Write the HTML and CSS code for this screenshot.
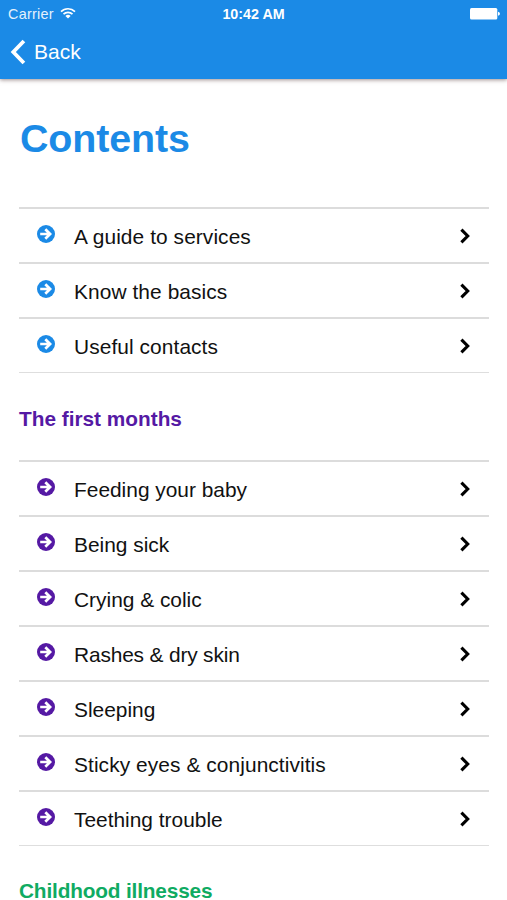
FILE: index.html
```html
<!DOCTYPE html>
<html lang="en">
<head>
<meta charset="utf-8">
<title>Contents</title>
<link rel="stylesheet" href="styles.css">
</head>
<body>
<svg class="symbols" aria-hidden="true">
  <symbol id="go" viewBox="0 0 18 18"><circle cx="9" cy="9" r="9" fill="currentColor"/><path d="M3.2 9H13M8.3 4.2L13.1 9L8.3 13.8" fill="none" stroke="#fff" stroke-width="2.7"/></symbol>
  <symbol id="chevron" viewBox="0 0 10 16"><path d="M1.4 1.7L7.7 8L1.4 14.3" fill="none" stroke="currentColor" stroke-width="3.1"/></symbol>
</svg>
<header class="header">
  <div class="status">
    <div class="carrier"><span>Carrier</span>
      <svg class="wifi" viewBox="0 0 16 12"><path d="M1 4.6A10 10 0 0 1 15 4.6M3.5 7.2A6.4 6.4 0 0 1 12.5 7.2" fill="none" stroke="currentColor" stroke-width="1.7"/><path d="M5.4 9A3.8 3.8 0 0 1 10.6 9L8 11.6Z" fill="currentColor"/></svg>
    </div>
    <div class="time">10:42 AM</div>
    <svg class="battery" viewBox="0 0 30 12"><rect width="27.3" height="11.6" rx="1.5" fill="currentColor"/><path d="M28 3.8Q30 4.4 30 5.8T28 7.8Z" fill="currentColor"/></svg>
  </div>
  <a class="back"><svg class="back-icon" viewBox="0 0 16 26"><path d="M13.9 2L3.3 13L13.9 24" fill="none" stroke="currentColor" stroke-width="3.8"/></svg><span>Back</span></a>
</header>
<main class="content">
  <h1 class="title">Contents</h1>
  <ul class="list blue">
    <li class="row"><svg class="go"><use href="#go"/></svg><span class="label loose">A guide to services</span><svg class="chevron"><use href="#chevron"/></svg></li>
    <li class="row"><svg class="go"><use href="#go"/></svg><span class="label loose">Know the basics</span><svg class="chevron"><use href="#chevron"/></svg></li>
    <li class="row"><svg class="go"><use href="#go"/></svg><span class="label loose">Useful contacts</span><svg class="chevron"><use href="#chevron"/></svg></li>
  </ul>
  <h2 class="section purple">The first months</h2>
  <ul class="list purple">
    <li class="row"><svg class="go"><use href="#go"/></svg><span class="label">Feeding your baby</span><svg class="chevron"><use href="#chevron"/></svg></li>
    <li class="row"><svg class="go"><use href="#go"/></svg><span class="label">Being sick</span><svg class="chevron"><use href="#chevron"/></svg></li>
    <li class="row"><svg class="go"><use href="#go"/></svg><span class="label">Crying &amp; colic</span><svg class="chevron"><use href="#chevron"/></svg></li>
    <li class="row"><svg class="go"><use href="#go"/></svg><span class="label tight">Rashes &amp; dry skin</span><svg class="chevron"><use href="#chevron"/></svg></li>
    <li class="row"><svg class="go"><use href="#go"/></svg><span class="label">Sleeping</span><svg class="chevron"><use href="#chevron"/></svg></li>
    <li class="row"><svg class="go"><use href="#go"/></svg><span class="label loose">Sticky eyes &amp; conjunctivitis</span><svg class="chevron"><use href="#chevron"/></svg></li>
    <li class="row"><svg class="go"><use href="#go"/></svg><span class="label">Teething trouble</span><svg class="chevron"><use href="#chevron"/></svg></li>
  </ul>
  <h2 class="section green tight">Childhood illnesses</h2>
</main>
</body>
</html>
```
FILE: styles.css
```css
* { box-sizing: border-box; }
body {
  margin: 0;
  background: #fff;
  color: #111;
  font-family: "Liberation Sans", Arial, sans-serif;
}
.symbols { display: none; }
svg { display: block; flex: none; }
.header {
  height: 79px;
  background: #1b8ae6;
  color: #fff;
  box-shadow: 0 1px 4px rgba(60, 30, 30, .5);
}
.status {
  display: grid;
  grid-template-columns: 1fr auto 1fr;
  align-items: center;
  height: 28px;
  padding: 0 8px;
}
.carrier { display: flex; align-items: center; gap: 6px; font-size: 14.4px; letter-spacing: .25px; color: #e4f1fc; }
.wifi { width: 16px; height: 12px; margin-top: -2px; color: #fff; }
.time { font-size: 14.3px; font-weight: bold; }
.battery { width: 30px; height: 12px; justify-self: end; margin-right: -1px; }
.back { display: flex; align-items: center; gap: 8px; height: 48px; padding-left: 10px; font-size: 21px; }
.back-icon { width: 16px; height: 26px; }
.content { padding: 35px 18px 0 19px; }
.title { margin: 0 0 45px; padding-left: 1px; font-size: 39.4px; line-height: 48px; letter-spacing: -.1px; color: #1b8ae6; }
.list { margin: 0; padding: 0; list-style: none; border-bottom: 1px solid #dedede; }
.row {
  display: flex;
  align-items: center;
  height: 55px;
  padding: 2px 19px 0 18px;
  border-top: 2px solid #dcdcdc;
}
.go { width: 18px; height: 18px; margin: -5px 19px 0 0; }
.label { flex: 1; font-size: 20.9px; line-height: 24px; color: #111; }
.chevron { width: 10px; height: 16px; margin-top: -1px; color: #000; }
.section { margin: 0; padding: 34px 0 29px; font-size: 20.8px; line-height: 24px; }
.section.green { padding: 35px 0 0; line-height: 19px; }
.tight { letter-spacing: -.16px; }
.loose { letter-spacing: .08px; }
.blue { color: #1b8ae6; }
.purple { color: #5519a4; }
.green { color: #0fab62; }
```
